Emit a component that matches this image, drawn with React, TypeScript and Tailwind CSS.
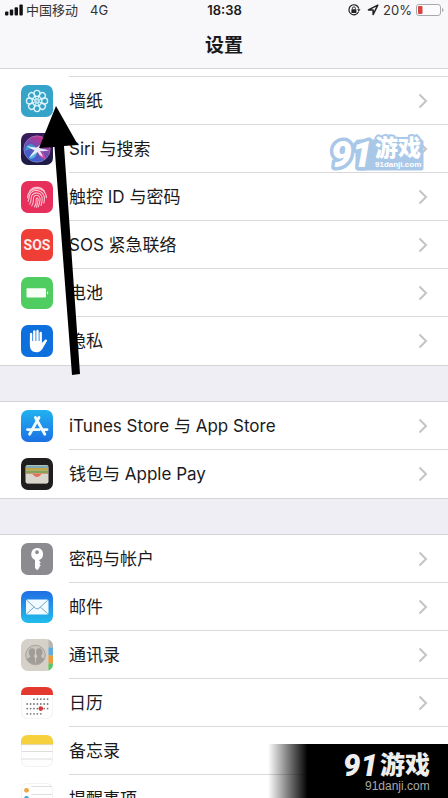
import type { ReactNode } from 'react';

interface SettingItem {
  label: string;
  icon: ReactNode;
}

const PETALS = [0, 45, 90, 135, 180, 225, 270, 315];

function IconTile({ fill, children }: { fill: string; children?: ReactNode }) {
  return (
    <svg viewBox="0 0 32 32" className="w-8 h-8 shrink-0" aria-hidden="true">
      <rect width="32" height="32" rx="7" fill={fill} />
      {children}
    </svg>
  );
}

function WallpaperIcon() {
  return (
    <IconTile fill="#36a3c9">
      <g fill="none" stroke="#dcf4fa" strokeWidth="1.3">
        {PETALS.map((angle) => (
          <g key={angle} transform={`rotate(${angle} 16 16)`}>
            <circle cx="16" cy="8.4" r="3" />
            <path d="M16 14.6L13.8 11.2M16 14.6L18.2 11.2" strokeWidth="0.8" />
          </g>
        ))}
        <circle cx="16" cy="16" r="1.3" strokeWidth="0.8" />
      </g>
    </IconTile>
  );
}

function SiriIcon() {
  return (
    <IconTile fill="url(#siri-bg)">
      <defs>
        <linearGradient id="siri-bg" x1="0" y1="0" x2="0" y2="1">
          <stop offset="0" stopColor="#3b1c5c" />
          <stop offset="1" stopColor="#1b1b45" />
        </linearGradient>
        <linearGradient id="siri-orb" x1="0.1" y1="0.9" x2="0.7" y2="0">
          <stop offset="0" stopColor="#2a66d9" />
          <stop offset="0.5" stopColor="#6a4fb4" />
          <stop offset="1" stopColor="#d42d86" />
        </linearGradient>
      </defs>
      <circle cx="16" cy="16" r="13.2" fill="url(#siri-orb)" stroke="#a38fc8" strokeWidth="0.6" />
      <path d="M4 18C6 9 12 10 16 16C11 15 8 16 4 18Z" fill="#29b8d8" opacity="0.7" />
      <path d="M16 16C21 18 25 22 24 26C20 26 16 21 16 16Z" fill="#e0489d" opacity="0.8" />
      <path d="M16 16C12 19 9 22 9 26C14 26 17 21 16 16Z" fill="#5ed6ea" opacity="0.7" />
      <path d="M5 13Q11 14 15.5 14.5Q18 13 20 11Q18.5 14 19 15.5Q24 16 28 17.5Q22 18.5 19 18Q21 21 22 24Q17.5 21.5 16.5 19Q12 22 7.5 25.5Q10.5 21 13.5 17.5Q10 15.5 5 13Z" fill="#f4f8ff" opacity="0.9" />
    </IconTile>
  );
}

function TouchIdIcon() {
  return (
    <IconTile fill="#e72f5c">
      <g fill="none" stroke="#fbc6d2" strokeWidth="1.1" strokeLinecap="round">
        <path d="M8.5 10.3C12 5 20 5 23.5 10.3" />
        <path d="M6.6 16.8C6.6 4.5 25.4 4.5 25.4 16.8" />
        <path d="M7 20.4C8.5 18.2 7.3 14.6 9.7 11.9C13.7 7.4 23 9.3 23.4 17.3C23.4 19.3 23.3 20.6 22.8 22.2" />
        <path d="M8.7 23C11.3 19.5 8.9 16.8 11.2 13.9C14.4 10.1 21.1 11.9 21.2 17.5C21.3 20.2 20.8 22.3 20 24.5" />
        <path d="M10.8 24.8C13.8 20.7 11.3 17.9 13.1 15.5C15.1 13.1 19.1 14.3 19.1 17.8C19.1 21 18.3 23.5 17.2 26" />
        <path d="M13.5 25.9C15.6 23.2 15.4 20.8 15.2 18.3C15.1 16.8 17 16.5 17.1 18.1C17.2 21.2 16.5 23.5 15.4 26.3" />
      </g>
    </IconTile>
  );
}

function SosIcon() {
  return (
    <span className="flex items-center justify-center w-8 h-8 shrink-0 rounded-[7px] bg-[#ee3e36] text-[#ffece9] text-[14px] leading-4 font-bold font-['Roboto',sans-serif]">
      SOS
    </span>
  );
}

function BatteryTileIcon() {
  return (
    <IconTile fill="#4fcd60">
      <rect x="5.5" y="11.3" width="19.5" height="9.2" rx="1" fill="#f8fff6" />
      <path d="M26 14.3C27.8 14.8 27.8 17 26 17.5Z" fill="#f8fff6" />
    </IconTile>
  );
}

function PrivacyIcon() {
  return (
    <IconTile fill="#0d70dc">
      <path d="M8.9 16V20.5C9 25 11.5 27.2 15.5 27.2C19.3 27.2 20.8 25 22.3 22.2L25.8 16.2C26.6 14.7 25 13.8 23.9 14.9L20.9 18V16Z" fill="#fff" />
      <g stroke="#fff" strokeWidth="2.4" strokeLinecap="round">
        <path d="M10.1 9V19" />
        <path d="M13.3 6.5V19" />
        <path d="M16.5 6V19" />
        <path d="M19.7 8V19" />
      </g>
    </IconTile>
  );
}

function AppStoreIcon() {
  return (
    <IconTile fill="url(#store-bg)">
      <defs>
        <linearGradient id="store-bg" x1="0" y1="0" x2="0" y2="1">
          <stop offset="0" stopColor="#22b2f0" />
          <stop offset="1" stopColor="#1b70e4" />
        </linearGradient>
      </defs>
      <g stroke="#f4fbff" strokeWidth="2.8" strokeLinecap="round">
        <path d="M14.4 7.5L23.8 24.2" />
        <path d="M18 7.5L8.6 24.2" />
        <path d="M6.5 19.6H18.5" />
        <path d="M22.5 19.6H26" />
      </g>
    </IconTile>
  );
}

function WalletIcon() {
  return (
    <IconTile fill="#1f1d1e">
      <rect x="4.5" y="7" width="23" height="18.5" rx="2" fill="#d9d6cd" />
      <path d="M5 9Q5 7.5 6.5 7.5H25.5Q27 7.5 27 9V10H5Z" fill="#7ea9b4" />
      <rect x="5" y="10" width="22" height="2.7" fill="#c2a449" />
      <rect x="5" y="12.7" width="22" height="2.7" fill="#82a45a" />
      <path d="M5 15.4H27V17H20L17.5 18.7Q16 19.8 14.5 18.7L12 17H5Z" fill="#e5705a" />
      <path d="M5 16H11.5Q12.5 18.9 16 18.9Q19.5 18.9 20.5 16H27V24Q27 25.3 25.5 25.3H6.5Q5 25.3 5 24Z" fill="#d9d6cd" />
    </IconTile>
  );
}

function KeyIcon() {
  return (
    <IconTile fill="#8c8b90">
      <path
        fillRule="evenodd"
        fill="#fff"
        d="M16 5A6.2 6.2 0 0 1 18.3 16.9V18L19.8 19.4L18.3 20.8L19.8 22.2L18.3 23.7V25L16.2 27.2L14 25V16.9A6.2 6.2 0 0 1 16 5ZM16 7.3A1.9 1.9 0 1 0 16 11.1A1.9 1.9 0 1 0 16 7.3Z"
      />
    </IconTile>
  );
}

function MailIcon() {
  return (
    <IconTile fill="url(#mail-bg)">
      <defs>
        <linearGradient id="mail-bg" x1="0" y1="0" x2="0" y2="1">
          <stop offset="0" stopColor="#206ee4" />
          <stop offset="1" stopColor="#22bdec" />
        </linearGradient>
      </defs>
      <rect x="5" y="8.5" width="22.5" height="15" rx="1.5" fill="#f1fbff" />
      <g fill="none" stroke="#6fa9cc" strokeWidth="1">
        <path d="M5.8 9.3L14.5 17.2Q16.2 18.6 18 17.2L26.7 9.3" />
        <path d="M5.8 22.7L13.2 16M26.7 22.7L19.3 16" />
      </g>
    </IconTile>
  );
}

function ContactsIcon() {
  return (
    <IconTile fill="#d5d1c8">
      <defs>
        <clipPath id="contacts-clip">
          <rect width="32" height="32" rx="7" />
        </clipPath>
      </defs>
      <g clipPath="url(#contacts-clip)">
        <rect x="27.5" y="0" width="5" height="8.5" fill="#b8b6b0" />
        <rect x="27.5" y="8.5" width="5" height="8" fill="#5caede" />
        <rect x="27.5" y="16.5" width="5" height="8" fill="#ee9b38" />
        <rect x="27.5" y="24.5" width="5" height="8" fill="#58c962" />
      </g>
      <circle cx="14.5" cy="16" r="9.8" fill="#c9c5bd" stroke="#a09d97" strokeWidth="0.9" />
      <g fill="#a09c96">
        <ellipse cx="11" cy="13.2" rx="3.2" ry="4" />
        <path d="M5.5 19.8Q10 18.2 10 16H12.5Q13 18.5 15 20V25Q8.5 25.5 5.5 19.8Z" />
        <ellipse cx="18.2" cy="13.2" rx="3.2" ry="4" />
        <path d="M23.5 19.8Q19.5 18.2 19.5 16H17Q16.5 18.5 14.6 20V25Q20.5 25.5 23.5 19.8Z" />
      </g>
      <path d="M14.6 10.5V24" stroke="#d5d1c8" strokeWidth="0.8" />
    </IconTile>
  );
}

// [first column, last column, y] for each line of days
const DAY_ROWS = [
  [2, 6, 12.2],
  [0, 6, 17],
  [0, 6, 21.6],
  [0, 4, 26.8],
];

function CalendarIcon() {
  return (
    <IconTile fill="#ececec">
      <rect x="0.5" y="0.5" width="31" height="31" rx="6.5" fill="#fefefe" />
      <path d="M0 8V7Q0 0 7 0H25Q32 0 32 7V8Z" fill="#e3392f" />
      {DAY_ROWS.map(([from, to, y]) =>
        Array.from({ length: to - from + 1 }, (_, i) => (
          <circle key={`${y}-${i}`} cx={6.2 + (from + i) * 3.4} cy={y} r="0.9" fill="#7d7678" />
        ))
      )}
      <circle cx="19.8" cy="21.6" r="2.3" fill="#d83a3a" />
    </IconTile>
  );
}

function NotesIcon() {
  return (
    <IconTile fill="#e9e9e7">
      <rect x="0.5" y="0.5" width="31" height="31" rx="6.5" fill="#fefefe" />
      <path d="M0 9.3V7Q0 0 7 0H25Q32 0 32 7V9.3Z" fill="#f7d03d" />
      <path d="M0 9.6H32" stroke="#d8c99b" strokeWidth="0.7" />
      <path d="M0.5 16.5H31.5M0.5 24H31.5" stroke="#d6d6d4" strokeWidth="0.8" />
    </IconTile>
  );
}

function RemindersIcon() {
  return (
    <IconTile fill="#e9e9e9">
      <rect x="0.5" y="0.5" width="31" height="31" rx="6.5" fill="#fefefe" />
      <path d="M10.5 3.5H31M10.5 11.5H31M10.5 20H31" stroke="#d6d6d6" strokeWidth="0.8" />
      <circle cx="5.5" cy="7.3" r="2.4" fill="#eda63f" />
      <circle cx="5.5" cy="15.3" r="2.4" fill="#3aa5d8" />
      <circle cx="5.5" cy="23.3" r="2.4" fill="#6cc950" />
    </IconTile>
  );
}

const groups: SettingItem[][] = [
  [
    { label: '墙纸', icon: <WallpaperIcon /> },
    { label: 'Siri 与搜索', icon: <SiriIcon /> },
    { label: '触控 ID 与密码', icon: <TouchIdIcon /> },
    { label: 'SOS 紧急联络', icon: <SosIcon /> },
    { label: '电池', icon: <BatteryTileIcon /> },
    { label: '隐私', icon: <PrivacyIcon /> },
  ],
  [
    { label: 'iTunes Store 与 App Store', icon: <AppStoreIcon /> },
    { label: '钱包与 Apple Pay', icon: <WalletIcon /> },
  ],
  [
    { label: '密码与帐户', icon: <KeyIcon /> },
    { label: '邮件', icon: <MailIcon /> },
    { label: '通讯录', icon: <ContactsIcon /> },
    { label: '日历', icon: <CalendarIcon /> },
    { label: '备忘录', icon: <NotesIcon /> },
    { label: '提醒事项', icon: <RemindersIcon /> },
  ],
];

function Chevron() {
  return (
    <svg viewBox="0 0 10 16" className="w-[10px] h-4 shrink-0" fill="none" aria-hidden="true">
      <path d="M1.5 1.5L8 8L1.5 14.5" stroke="#c4c4c8" strokeWidth="2" />
    </svg>
  );
}

function SettingRow({ item, last }: { item: SettingItem; last: boolean }) {
  return (
    <li>
      <a href="#" className="flex h-12 pl-[21px] gap-4">
        <span className="flex items-center">{item.icon}</span>
        <span
          className={
            last
              ? 'flex flex-1 items-center justify-between pr-5'
              : 'flex flex-1 items-center justify-between pr-5 border-b border-[#d9d9dc]'
          }
        >
          <span className="text-[17px] leading-6">{item.label}</span>
          <Chevron />
        </span>
      </a>
    </li>
  );
}

function StatusBar() {
  return (
    <div className="grid grid-cols-3 items-center h-5 pl-[5px] pr-1 text-[13px] leading-5">
      <div className="flex items-center">
        <svg viewBox="0 0 18 12" className="w-[18px] h-3" fill="#111" aria-hidden="true">
          <rect x="0" y="7.5" width="3.4" height="4" rx="1" />
          <rect x="4.8" y="5.5" width="3.4" height="6" rx="1" />
          <rect x="9.6" y="3.3" width="3.4" height="8.2" rx="1" />
          <rect x="14.4" y="0.5" width="3.4" height="11" rx="1" />
        </svg>
        <span className="ml-[3px] text-[#333]">中国移动</span>
        <span className="ml-3 text-[#333]">4G</span>
      </div>
      <span className="text-center font-semibold">18:38</span>
      <div className="flex items-center justify-end">
        <svg viewBox="0 0 14 14" className="w-[14px] h-[14px]" fill="none" stroke="#222" aria-hidden="true">
          <path d="M11.6 8.6A5 5 0 1 1 11.8 5.6" strokeWidth="1.2" />
          <path d="M10 6.2H13.6L11.8 8.6Z" fill="#222" stroke="none" />
          <rect x="4.4" y="6.3" width="5" height="3.6" rx="0.5" fill="#222" stroke="none" />
          <path d="M5.4 6.3V5.2Q5.4 3.9 6.9 3.9Q8.4 3.9 8.4 5.2V6.3" strokeWidth="0.9" />
        </svg>
        <svg viewBox="0 0 12 12" className="w-3 h-3 ml-1.5" fill="none" aria-hidden="true">
          <path d="M10.8 1.2L1.4 5.9H6.1V10.6Z" stroke="#222" strokeWidth="1.5" strokeLinejoin="round" />
        </svg>
        <span className="ml-1 text-[#333]">20%</span>
        <svg viewBox="0 0 28 12" className="w-7 h-3 ml-1" aria-hidden="true">
          <rect x="0.5" y="0.5" width="24" height="11" rx="2.5" fill="#fbfafc" stroke="#a9a8ab" />
          <rect x="2" y="2" width="4.5" height="8" rx="1" fill="#d8443e" />
          <path d="M26 4Q27.6 4.6 27.6 6T26 8Z" fill="#a9a8ab" />
        </svg>
      </div>
    </div>
  );
}

function PointerArrow() {
  return (
    <svg viewBox="0 0 42 270" className="absolute left-[39px] top-[106px] w-[42px] h-[270px] pointer-events-none" aria-hidden="true">
      <path d="M17 0L39 39L25 40L41 268L33 269L15.5 41L0 42Z" fill="#000" />
    </svg>
  );
}

function FloatingLogo() {
  return (
    <svg
      viewBox="0 0 100 44"
      className="absolute right-5 top-[130px] w-[100px] h-11 pointer-events-none"
      fill="#fff"
      stroke="#a9c8e8"
      strokeLinejoin="round"
      paintOrder="stroke"
      fontFamily="Roboto, sans-serif"
      fontWeight="900"
    >
      <path d="M30 12H93V38H30Z" fill="#a9c8e8" strokeWidth="5" />
      <text x="3" y="37" fontSize="37" fontStyle="italic" strokeWidth="7">91</text>
      <text x="47" y="26" fontSize="23" fontFamily="'Noto Sans CJK SC', sans-serif" strokeWidth="4">游戏</text>
      <text x="47" y="37" fontSize="8" fontWeight="700" fontFamily="'Liberation Sans', sans-serif" stroke="none">91danji.com</text>
    </svg>
  );
}

function CornerLogo() {
  return (
    <div className="absolute right-0 bottom-0 w-[180px] h-[54px] bg-linear-to-r from-transparent to-black to-[22%] pointer-events-none">
      <svg viewBox="0 0 180 54" className="w-full h-full" fontFamily="Roboto, sans-serif">
        <text x="75" y="32" fontSize="31" fontWeight="900" fontStyle="italic" fill="#eee">91</text>
        <text x="112" y="30" fontSize="25" fontWeight="900" fontFamily="'Noto Sans CJK SC', sans-serif" fill="#eee">游戏</text>
        <text x="97" y="46" fontSize="12" fontFamily="'Liberation Sans', sans-serif" fill="#aaa">91danji.com</text>
      </svg>
    </div>
  );
}

export default function App() {
  return (
    <div className="relative h-screen overflow-hidden bg-white text-[#1a1a1c] font-['Inter','Noto_Sans_CJK_SC',sans-serif]">
      <header className="h-[69px] bg-[#f8f7fa] border-b border-[#d4d4d7]">
        <StatusBar />
        <h1 className="pt-3.5 text-center text-[19px] leading-6 font-semibold">设置</h1>
      </header>

      <main>
        <div className="h-2 pl-[69px]">
          <div className="h-full border-b border-[#d9d9dc]" />
        </div>
        {groups.map((items, index) => (
          <section key={index}>
            {index > 0 && <div className="h-[37px] bg-[#efeef4] border-y border-[#d4d4d7]" />}
            <ul>
              {items.map((item, i) => (
                <SettingRow key={item.label} item={item} last={i === items.length - 1} />
              ))}
            </ul>
          </section>
        ))}
      </main>

      <PointerArrow />
      <FloatingLogo />
      <CornerLogo />
    </div>
  );
}
